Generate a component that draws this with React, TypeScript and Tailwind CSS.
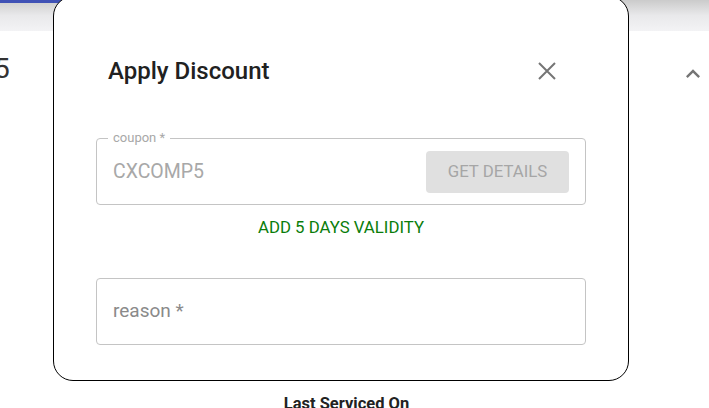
import React from 'react';

const font = { fontFamily: 'Roboto, "Helvetica Neue", Arial, sans-serif' };

const CloseIcon = () => (
  <svg width="20" height="20" viewBox="0 0 20 20" className="text-[#757575]">
    <path d="M2 2 L18 18 M18 2 L2 18" stroke="currentColor" strokeWidth="2" fill="none" />
  </svg>
);

const ExpandLess = () => (
  <svg width="28" height="28" viewBox="0 0 24 24" className="text-[#757575]">
    <path fill="currentColor" d="M12 8l-6 6 1.41 1.41L12 10.83l4.59 4.58L18 14z" />
  </svg>
);

export default function App() {
  return (
    <div style={font} className="relative w-[709px] h-[408px] overflow-hidden bg-white">
      {/* page behind the dialog */}
      <div className="flex flex-col h-full">
        <div className="relative h-[31px] bg-gradient-to-b from-[#cbcbcb] via-[#e9e9eb] to-[#f3f3f5]">
          <div className="h-[3px] w-[300px] bg-[#3f51b5]" />
        </div>
        <div className="flex items-center justify-between h-[46px] mt-[15px] pr-[2px]">
          <span className="ml-[-6px] text-[28px] text-[#333] leading-none">5</span>
          <span className="mt-[10px]">
            <ExpandLess />
          </span>
        </div>
        <div className="flex-1" />
        <div className="flex justify-center pr-[16px] mb-[-6px]">
          <span className="text-[16.5px] font-bold text-[#222] leading-[20px]">Last Serviced On</span>
        </div>
      </div>

      {/* dialog */}
      <div className="absolute left-[53px] top-[-4px] w-[576px] h-[385px] bg-white border border-black rounded-[20px]">
        <div className="pt-[58px]">
          <div className="flex items-center justify-between h-[32px] pl-[54px] pr-[71px]">
            <h2 className="text-[24px] font-medium text-[#212121] leading-[32px]">Apply Discount</h2>
            <CloseIcon />
          </div>

          <div className="mx-[42px] mt-[51px]">
            <div className="relative h-[67px] border border-[#c4c4c4] rounded-[4px] flex items-center justify-between pl-[16px] pr-[16px]">
              <span className="absolute left-[11px] top-[-9px] px-[5px] bg-white text-[13px] leading-[16px] text-[#a8a8a8]">
                coupon *
              </span>
              <span className="text-[19.5px] text-[#a8a8a8]">CXCOMP5</span>
              <button className="w-[143px] h-[42px] rounded-[4px] bg-[#e0e0e0] text-[16.8px] text-[#a6a6a6] uppercase">
                Get Details
              </button>
            </div>

            <div className="mt-[12px] text-center text-[16.8px] leading-[20px] text-[#0a7d0a]">
              ADD 5 DAYS VALIDITY
            </div>

            <div className="mt-[41px] h-[67px] border border-[#c4c4c4] rounded-[4px] flex items-center pl-[16px]">
              <span className="text-[19px] text-[#8a8a8a]">reason *</span>
            </div>
          </div>
        </div>
      </div>
    </div>
  );
}
